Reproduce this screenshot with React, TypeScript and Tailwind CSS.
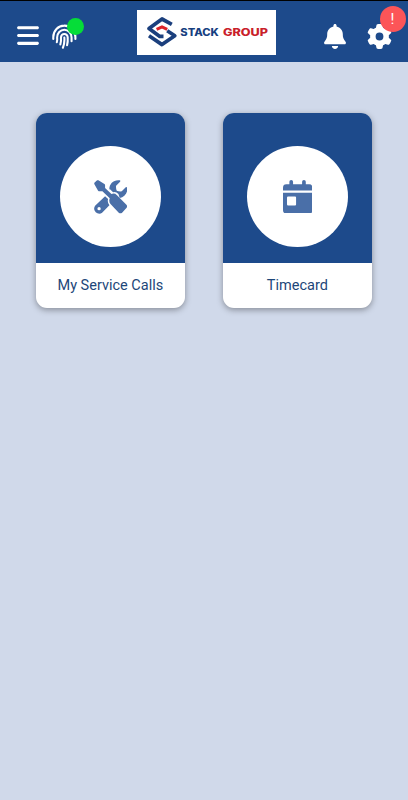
import { ReactNode } from 'react';
import { FaBars, FaBell, FaGear } from 'react-icons/fa6';

function Logo() {
  return (
    <div className="ml-[60px] flex h-[45px] w-[139px] items-center bg-white">
      <svg className="h-full w-full" viewBox="0 0 139 45" fill="none">
        <g stroke="#1b3f7d" strokeWidth="3.7" strokeLinejoin="round">
          <path d="M34.8 14.3 25 9 12 18.6 22.8 26.4 26.5 26.4" />
          <path d="M30.2 20.8 37.8 25.8 25 34.6 12 25.8" />
        </g>
        <path d="M19.6 19.4 25 16.8 30.2 19.4" stroke="#dc2329" strokeWidth="3" />
        <text
          x="43.3"
          y="26"
          fontSize="10"
          textLength="38.5"
          lengthAdjust="spacingAndGlyphs"
          className="fill-[#173f80] font-['Inter',sans-serif] font-extrabold"
        >
          STACK
        </text>
        <text
          x="86"
          y="26"
          fontSize="10"
          textLength="45"
          lengthAdjust="spacingAndGlyphs"
          className="fill-[#c9202a] font-['Inter',sans-serif] font-extrabold"
        >
          GROUP
        </text>
      </svg>
    </div>
  );
}

function FingerprintIcon() {
  return (
    <svg
      className="size-[25px]"
      viewBox="0 0 78 78"
      fill="none"
      stroke="currentColor"
      strokeWidth="6.5"
      strokeLinecap="round"
    >
      <path d="M4 47V41A34 36 0 0 1 38 5A34 36 0 0 1 73 41V47" />
      <path d="M15 57Q17 51 16 42A22.500 24 0 0 1 61 42V54" />
      <path d="M26 64Q29 54 28 42A10.500 11 0 0 1 49 42Q50 55 47 66" />
      <path d="M38.500 42Q40 60 34 74" />
    </svg>
  );
}

function ToolsIcon() {
  return (
    <svg className="h-[34px] w-[33.5px]" viewBox="0 0 100 102" fill="currentColor">
      <path d="M1 8 9 1Q11 0 13 1L31 12Q33 13 33 15L33 24 52 42Q61 38 68 45L97 74Q101 79 97 84L84 98Q79 102 74 98L50 73Q43 65 47 55L25 34 16 34Q14 34 12 32L1 13Q0 10 1 8Z" />
      <path d="M46 30C44 13 58-2 77 1Q80 2 78 5L66 17Q65 26 68 32Q75 35 83 34L95 22Q98 20 99 23C102 39 91 51 77 54L73 42Q65 34 57 37L47 27Z" />
      <path
        fillRule="evenodd"
        d="M33 49 42 57Q39 68 46 76L24 98C12 108-7 91 3 77ZM15 81A5 5 0 1 0 15 91A5 5 0 1 0 15 81Z"
      />
    </svg>
  );
}

function TimecardIcon() {
  return (
    <svg className="h-[33.5px] w-[29.5px]" viewBox="0 0 88 100" fill="currentColor">
      <path d="M19 13V5Q19 0 24.500 0T30 5V13H57V5Q57 0 62.500 0T68 5V13H78Q88 13 88 23V31H0V23Q0 13 10 13Z" />
      <path
        fillRule="evenodd"
        d="M0 38H88V90Q88 100 78 100H10Q0 100 0 90ZM15 49Q12 49 12 52V73Q12 76 15 76H36Q39 76 39 73V52Q39 49 36 49Z"
      />
    </svg>
  );
}

function Header() {
  return (
    <header className="flex h-[61.5px] items-start border-t border-black bg-[#1d4a8b] pt-[9px] text-white">
      <button className="mt-[12.5px] ml-[16.5px]" aria-label="Menu">
        <FaBars className="h-[25px] w-[22px]" />
      </button>
      <button className="relative mt-[14px] ml-[13px]" aria-label="Clock in">
        <FingerprintIcon />
        <span className="absolute -top-[6px] left-[15px] size-[17px] rounded-full bg-[#05dd38]" />
      </button>
      <Logo />
      <button className="mt-[14px] ml-[48px]" aria-label="Notifications">
        <FaBell className="h-[25px] w-[22px]" />
      </button>
      <button className="relative mt-[14px] ml-[21px]" aria-label="Settings">
        <FaGear className="size-[25px]" />
        <span className="absolute -top-[18px] left-[13px] flex size-[26px] items-center justify-center rounded-full bg-[#fc5558] text-[15px]">
          !
        </span>
      </button>
    </header>
  );
}

function Tile({ label, children }: { label: string; children: ReactNode }) {
  return (
    <button className="w-[149.5px] overflow-hidden rounded-[11px] bg-white shadow-[0_2px_6px_rgba(0,0,0,0.35)]">
      <div className="flex h-[150px] justify-center bg-[#1d4a8b] pt-[33px]">
        <div className="flex size-[101px] items-center justify-center rounded-full bg-white text-[#4a6fa8]">
          {children}
        </div>
      </div>
      <div className="flex h-[45px] items-center justify-center text-[14.5px] text-[#1d4679]">{label}</div>
    </button>
  );
}

export default function App() {
  return (
    <div className="min-h-screen bg-[#d0d9ea] font-['Roboto',sans-serif]">
      <Header />
      <main className="flex gap-[37.5px] pt-[51.5px] pl-[35.6px]">
        <Tile label="My Service Calls">
          <ToolsIcon />
        </Tile>
        <Tile label="Timecard">
          <TimecardIcon />
        </Tile>
      </main>
    </div>
  );
}
